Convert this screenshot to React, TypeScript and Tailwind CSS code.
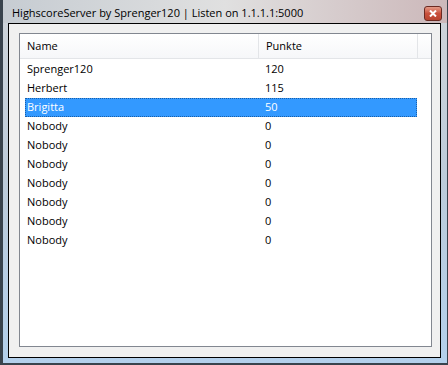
import type { ReactNode } from "react";

const rows: { name: string; score: string; selected?: boolean }[] = [
  { name: "Sprenger120", score: "120" },
  { name: "Herbert", score: "115" },
  { name: "Brigitta", score: "50", selected: true },
  { name: "Nobody", score: "0" },
  { name: "Nobody", score: "0" },
  { name: "Nobody", score: "0" },
  { name: "Nobody", score: "0" },
  { name: "Nobody", score: "0" },
  { name: "Nobody", score: "0" },
  { name: "Nobody", score: "0" },
];

function HeaderCell({ children, className = "" }: { children?: ReactNode; className?: string }) {
  return (
    <div className={`flex items-center border-r border-[#e3e5e8] pl-[7px] ${className}`}>
      {children}
    </div>
  );
}

export default function App() {
  return (
    <div
      className="w-[448px] h-[365px] overflow-hidden bg-[#39434d] text-[11px] text-black"
      style={{ fontFamily: "'Open Sans', 'Noto Sans', sans-serif" }}
    >
      <div className="ml-[3px] mr-[1px] h-[363px] flex flex-col bg-gradient-to-b from-[#cfd4d9] via-[#bccbda] to-[#b3d0ec]">
        {/* title bar */}
        <div className="h-[23px] flex items-center justify-between pl-[9px] pr-[5px] bg-gradient-to-r from-[#c6ccd2] via-[#e0e0e0] to-[#ccb8ba]">
          <span className="text-[11px] leading-none pt-[1px]">HighscoreServer by Sprenger120 | Listen on 1.1.1.1:5000</span>
          <div className="w-[18px] h-[15px] mt-[4px] rounded-[3px] border border-[#6b2a22] bg-gradient-to-b from-[#e49a88] via-[#c9503c] to-[#b8442f] flex items-center justify-center">
            <svg width="8" height="7" viewBox="0 0 8 7">
              <path d="M1 0.5 L7 6.5 M7 0.5 L1 6.5" stroke="#ffffff" strokeWidth="2" />
            </svg>
          </div>
        </div>

        {/* client area */}
        <div className="ml-[5px] mr-[6px] h-[335px] border border-black bg-[#f0f0f0] pt-[9px] pl-[10px] pr-[8px] pb-[10px]">
          <div className="h-full border border-[#828790] bg-white flex flex-col">
            <div className="h-[25px] flex border-b border-[#e3e5e8] bg-gradient-to-b from-white to-[#f6f7f9]">
              <HeaderCell className="w-[239px]">Name</HeaderCell>
              <HeaderCell className="w-[159px]">Punkte</HeaderCell>
              <div className="flex-1" />
            </div>
            <div className="pt-[1px] pl-[5px]">
              {rows.map((r, i) => (
                <div
                  key={i}
                  className={`w-[392px] h-[19px] grid grid-cols-[240px_1fr] items-center ${
                    r.selected ? "bg-[#3399ff] text-white outline outline-1 outline-dotted outline-[#1a5fa8] -outline-offset-1" : ""
                  }`}
                >
                  <span className="pl-[2px]">{r.name}</span>
                  <span>{r.score}</span>
                </div>
              ))}
            </div>
          </div>
        </div>
      </div>
    </div>
  );
}
